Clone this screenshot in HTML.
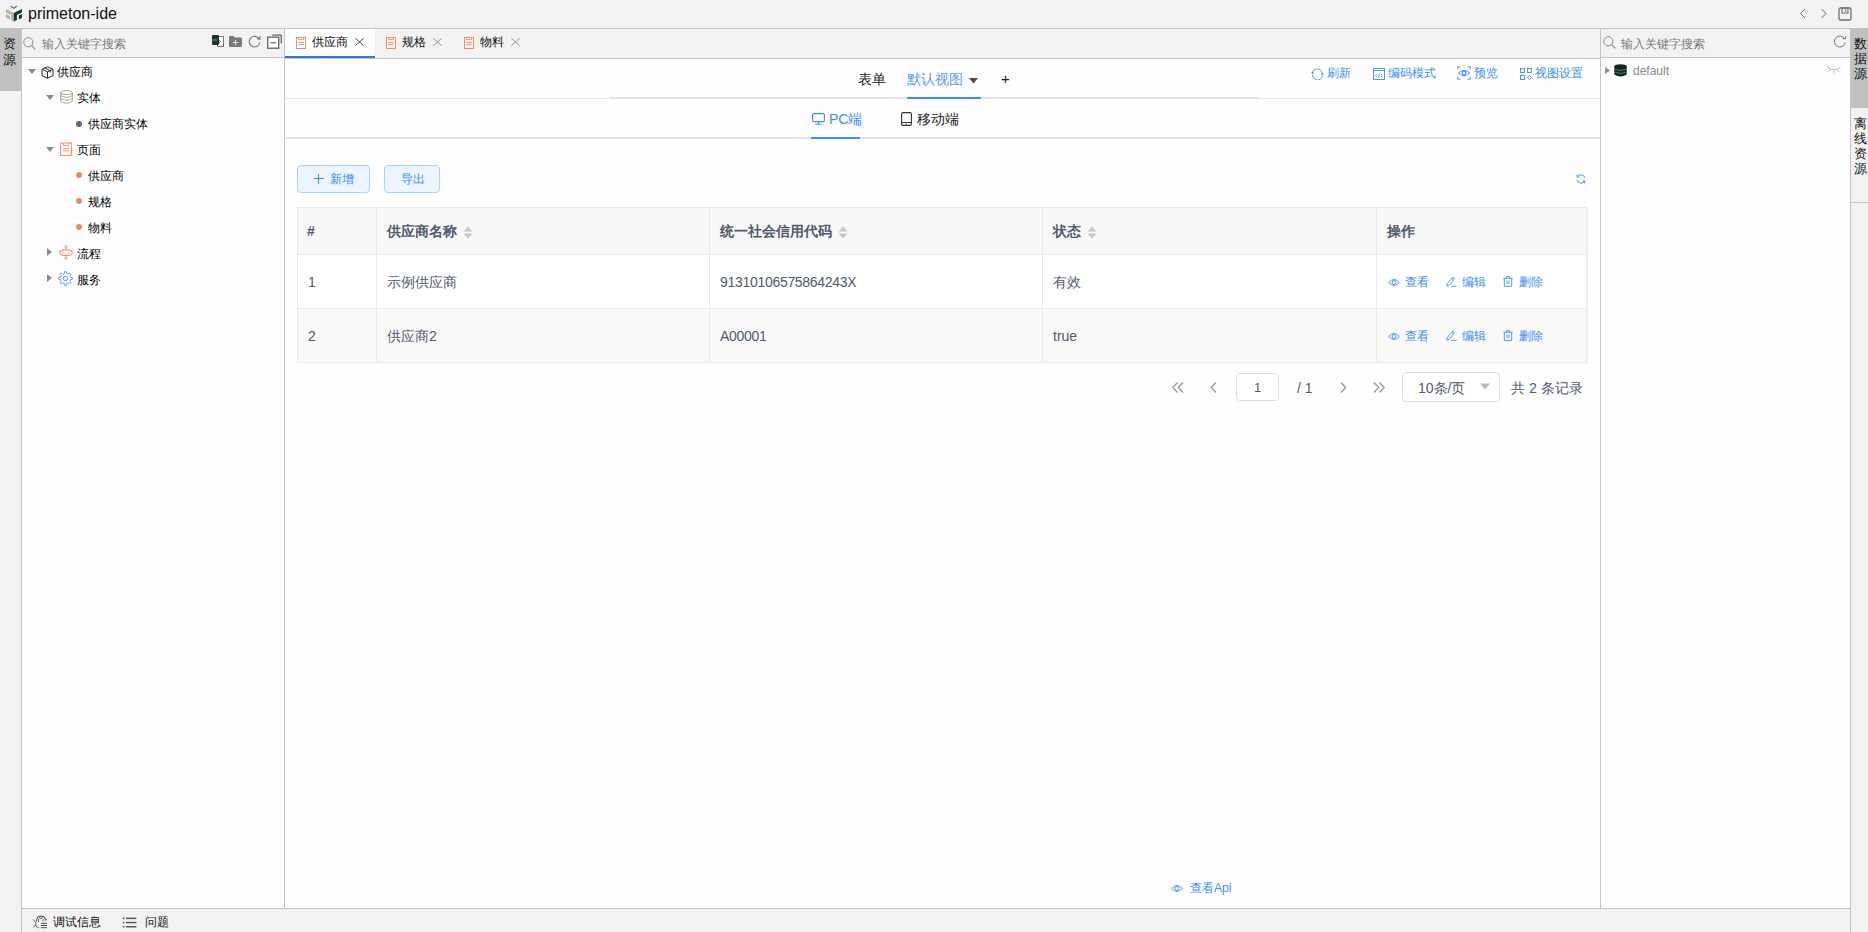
<!DOCTYPE html>
<html><head><meta charset="utf-8">
<style>
*{box-sizing:border-box;margin:0;padding:0}
html,body{width:1868px;height:932px;overflow:hidden;background:#f2f2f2;font-family:"Liberation Sans",sans-serif;color:#1f1f1f}
.abs{position:absolute}
svg{display:block}
#title{left:0;top:0;width:1868px;height:29px;background:#f2f2f2;border-bottom:1px solid #c4c4c4}
#lstrip{left:0;top:29px;width:22px;height:903px;background:#f2f2f2;border-right:1px solid #c4c4c4}
#lpanel{left:22px;top:29px;width:262px;height:879px;background:#fefefe}
#vdiv1{left:284px;top:29px;width:1px;height:879px;background:#c4c4c4}
#center{left:285px;top:29px;width:1315px;height:879px;background:#fefefe}
#vdiv2{left:1600px;top:29px;width:1px;height:879px;background:#c4c4c4}
#rpanel{left:1601px;top:29px;width:249px;height:879px;background:#fefefe}
#rstrip{left:1850px;top:29px;width:18px;height:903px;background:#f2f2f2;border-left:1px solid #c4c4c4}
#bottom{left:22px;top:908px;width:1828px;height:24px;background:#f2f2f2;border-top:1px solid #c4c4c4}
.search{height:29px;background:#f2f2f2;border-bottom:1px solid #c4c4c4}
.ph{color:#7a7a7a;font-size:12px}
.tree{font-size:12px;color:#000}
.blue{color:#3d8ef8}
</style></head><body>
<div id="title" class="abs">
  <svg class="abs" style="left:0;top:0" width="28" height="28" viewBox="0 0 28 28">
    <path d="M10.8 6L13.8 8.2 16.9 6" stroke="#6a6670" stroke-width="1.3" fill="none"/>
    <path d="M6 9L13.8 13V16.5L6 12.4z M11 11.6L13.8 13V21.6L11 20.1z M6 14L10 16V19.6L6 17.7z" fill="#b3b6a3"/>
    <path d="M21.9 9L13.8 13V16.5L21.9 12.4z M16.9 11.5L13.8 13V21.6L16.9 20.1z M21.9 14L18.9 15.5V19.4L21.9 17.9z" fill="#0f3a2b"/>
  </svg>
  <div class="abs" style="left:28px;top:5px;font-size:16px;line-height:18px;color:#111">primeton-ide</div>
  <svg class="abs" style="left:1799px;top:8px" width="8" height="11" viewBox="0 0 8 11"><path d="M6 1L1.5 5.5 6 10" stroke="#666" fill="none"/></svg>
  <svg class="abs" style="left:1820px;top:8px" width="8" height="11" viewBox="0 0 8 11"><path d="M1.5 1L6 5.5 1.5 10" stroke="#666" fill="none"/></svg>
  <svg class="abs" style="left:1838px;top:7px" width="14" height="14" viewBox="0 0 14 14"><rect x="1" y="1" width="12" height="12" rx="1.5" stroke="#6f6f6f" stroke-width="1.3" fill="none"/><rect x="4" y="1" width="6" height="5" stroke="#6f6f6f" stroke-width="1.1" fill="none"/><rect x="7" y="2.5" width="1.2" height="2" fill="#6f6f6f"/></svg>
</div>

<div id="lstrip" class="abs">
  <div class="abs" style="left:0;top:0;width:21px;height:62px;background:#c0c0c0"></div>
  <div class="abs" style="left:3px;top:7px;width:14px;font-size:13px;line-height:16px;color:#111">资<br>源</div>
</div>

<div id="lpanel" class="abs">
  <div class="search abs" style="left:0;top:0;width:262px">
    <svg class="abs" style="left:1px;top:8px" width="13" height="13" viewBox="0 0 13 13"><circle cx="5.3" cy="5.3" r="4.6" stroke="#8a8a8a" stroke-width="1" fill="none"/><path d="M8.6 8.6L12.3 12.3" stroke="#8a8a8a" stroke-width="1.1"/></svg>
    <div class="abs ph" style="left:20px;top:7px;line-height:16px">输入关键字搜索</div>
    <svg class="abs" style="left:190px;top:6px" width="12" height="12" viewBox="0 0 12 12"><rect x="5.5" y="1.5" width="6" height="10" fill="#fff" stroke="#777" stroke-width="1"/><path d="M7 5l2 2M7 8l2-2" stroke="#555" stroke-width="0.8"/><rect x="0" y="0" width="7" height="10" rx="1" fill="#123a2c"/><text x="0.5" y="6" font-size="4" fill="#bbb" font-family="Liberation Sans">on</text></svg>
    <svg class="abs" style="left:207px;top:7px" width="13" height="11" viewBox="0 0 13 11"><path d="M0 1.2Q0 0 1.2 0H4.5L6 1.6H11.8Q13 1.6 13 2.8V9.8Q13 11 11.8 11H1.2Q0 11 0 9.8z" fill="#7a797c"/><path d="M6.5 4v5M4 6.5h5" stroke="#e8e8e8" stroke-width="1"/></svg>
    <svg class="abs" style="left:226px;top:6px" width="13" height="13" viewBox="0 0 13 13"><path d="M11.3 4.2A5.3 5.3 0 1 0 11.8 7.5" stroke="#777" stroke-width="1.1" fill="none"/><path d="M9 3.6L12 4.2 12 1" stroke="#777" stroke-width="1.1" fill="none"/></svg>
    <svg class="abs" style="left:245px;top:5px" width="15" height="15" viewBox="0 0 15 15"><path d="M5 1.2H14.3V9.5" stroke="#6e6e70" stroke-width="1.3" fill="none"/><rect x="0.7" y="3.2" width="11" height="11" stroke="#6e6e70" stroke-width="1.4" fill="#fff"/><path d="M3.5 8.7H9" stroke="#6e6e70" stroke-width="1.3"/></svg>
  </div>
  <div class="tree">
    <svg class="abs" style="left:6px;top:40px" width="8" height="6" viewBox="0 0 8 6"><path d="M0 0h8L4 5z" fill="#8c8c8c"/></svg>
    <svg class="abs" style="left:19px;top:37px" width="13" height="13" viewBox="0 0 13 13"><path d="M6.5 0.8L12 3.3V9.7L6.5 12.2 1 9.7V3.3z" stroke="#1c2b26" stroke-width="1" fill="none"/><path d="M1 3.3L6.5 5.8 12 3.3M6.5 5.8V12.2M3.8 2L9.2 4.6V6.5" stroke="#1c2b26" stroke-width="1" fill="none"/></svg>
    <div class="abs" style="left:35px;top:35px;line-height:16px">供应商</div>

    <svg class="abs" style="left:24px;top:66px" width="8" height="6" viewBox="0 0 8 6"><path d="M0 0h8L4 5z" fill="#8c8c8c"/></svg>
    <svg class="abs" style="left:38px;top:61px" width="13" height="14" viewBox="0 0 13 14"><ellipse cx="6.5" cy="2.6" rx="5.8" ry="2" stroke="#9aa07a" stroke-width="0.9" fill="none"/><path d="M0.7 2.6V11.4Q6.5 15 12.3 11.4V2.6M0.7 5.6Q6.5 9 12.3 5.6M0.7 8.6Q6.5 12 12.3 8.6" stroke="#9aa07a" stroke-width="0.9" fill="none"/></svg>
    <div class="abs" style="left:55px;top:61px;line-height:16px">实体</div>

    <div class="abs" style="left:54px;top:92px;width:6px;height:6px;border-radius:50%;background:#666"></div>
    <div class="abs" style="left:66px;top:87px;line-height:16px">供应商实体</div>

    <svg class="abs" style="left:24px;top:118px" width="8" height="6" viewBox="0 0 8 6"><path d="M0 0h8L4 5z" fill="#8c8c8c"/></svg>
    <svg class="abs" style="left:38px;top:113px" width="12" height="14" viewBox="0 0 12 14"><rect x="0.6" y="1" width="10.8" height="12.4" stroke="#ee8b66" stroke-width="1" fill="none"/><path d="M3.5 1V3.6H8.5V1M3 6.5H9M3 8.8H9" stroke="#ee8b66" stroke-width="0.9" fill="none"/></svg>
    <div class="abs" style="left:55px;top:113px;line-height:16px">页面</div>

    <div class="abs" style="left:54px;top:143px;width:6px;height:6px;border-radius:50%;background:#e88c5e"></div>
    <div class="abs" style="left:66px;top:139px;line-height:16px">供应商</div>
    <div class="abs" style="left:54px;top:169px;width:6px;height:6px;border-radius:50%;background:#e88c5e"></div>
    <div class="abs" style="left:66px;top:165px;line-height:16px">规格</div>
    <div class="abs" style="left:54px;top:195px;width:6px;height:6px;border-radius:50%;background:#e88c5e"></div>
    <div class="abs" style="left:66px;top:191px;line-height:16px">物料</div>

    <svg class="abs" style="left:25px;top:219px" width="6" height="8" viewBox="0 0 6 8"><path d="M0 0v8L5 4z" fill="#8c8c8c"/></svg>
    <svg class="abs" style="left:37px;top:216px" width="14" height="15" viewBox="0 0 14 15"><rect x="0.8" y="5" width="12.4" height="5.4" rx="2.7" stroke="#e8875a" stroke-width="1" fill="none"/><path d="M3.8 6.3V9.1M10.2 6.3V9.1M7 3.2V5M7 10.4V12" stroke="#e8875a" stroke-width="0.8"/><circle cx="7" cy="2" r="1.2" stroke="#e8875a" stroke-width="0.8" fill="none"/><circle cx="7" cy="13.2" r="1.2" stroke="#e8875a" stroke-width="0.8" fill="none"/></svg>
    <div class="abs" style="left:55px;top:217px;line-height:16px">流程</div>

    <svg class="abs" style="left:25px;top:245px" width="6" height="8" viewBox="0 0 6 8"><path d="M0 0v8L5 4z" fill="#8c8c8c"/></svg>
    <svg class="abs" style="left:36px;top:242px" width="15" height="15" viewBox="0 0 15 15"><path d="M12.21 5.55L12.46 6.31L14.34 6.58L14.34 8.42L12.46 8.69L12.21 9.45L11.85 10.16L12.99 11.69L11.69 12.99L10.16 11.85L9.45 12.21L8.69 12.46L8.42 14.34L6.58 14.34L6.31 12.46L5.55 12.21L4.84 11.85L3.31 12.99L2.01 11.69L3.15 10.16L2.79 9.45L2.54 8.69L0.66 8.42L0.66 6.58L2.54 6.31L2.79 5.55L3.15 4.84L2.01 3.31L3.31 2.01L4.84 3.15L5.55 2.79L6.31 2.54L6.58 0.66L8.42 0.66L8.69 2.54L9.45 2.79L10.16 3.15L11.69 2.01L12.99 3.31L11.85 4.84Z" stroke="#4b93f0" stroke-width="0.9" fill="none" stroke-linejoin="round"/><circle cx="7.5" cy="7.5" r="2.2" stroke="#4b93f0" stroke-width="1" fill="none"/></svg>
    <div class="abs" style="left:55px;top:243px;line-height:16px">服务</div>
  </div>
</div>
<div id="vdiv1" class="abs"></div>
<div id="center" class="abs">
  <div class="abs" style="left:0;top:0;width:1315px;height:30px;background:#f2f2f2;border-bottom:1px solid #c4c4c4"></div>
  <div class="abs" style="left:0;top:0;width:90px;height:29px;background:#fff;border-bottom:2px solid #2e78c8"></div>
  <svg class="abs tabic" style="left:11px;top:8px" width="10" height="12" viewBox="0 0 10 12"><rect x="0.5" y="0.5" width="9" height="11" stroke="#ec9070" stroke-width="1" fill="none"/><path d="M2.5 0.5V2.5H7.5V0.5M2.2 5.5H7.8M2.2 7.6H7.8" stroke="#ec9070" stroke-width="0.9" fill="none"/></svg>
  <div class="abs" style="left:27px;top:5px;font-size:12px;line-height:16px;color:#111">供应商</div>
  <svg class="abs" style="left:70px;top:9px" width="9" height="8" viewBox="0 0 9 8"><path d="M0.3 0.3L8.7 7.7M8.7 0.3L0.3 7.7" stroke="#3a3a3a" stroke-width="0.9"/></svg>

  <svg class="abs tabic" style="left:101px;top:8px" width="10" height="12" viewBox="0 0 10 12"><rect x="0.5" y="0.5" width="9" height="11" stroke="#ec9070" stroke-width="1" fill="none"/><path d="M2.5 0.5V2.5H7.5V0.5M2.2 5.5H7.8M2.2 7.6H7.8" stroke="#ec9070" stroke-width="0.9" fill="none"/></svg>
  <div class="abs" style="left:117px;top:5px;font-size:12px;line-height:16px;color:#111">规格</div>
  <svg class="abs" style="left:148px;top:9px" width="9" height="8" viewBox="0 0 9 8"><path d="M0.3 0.3L8.7 7.7M8.7 0.3L0.3 7.7" stroke="#8a8a8a" stroke-width="0.9"/></svg>

  <svg class="abs tabic" style="left:179px;top:8px" width="10" height="12" viewBox="0 0 10 12"><rect x="0.5" y="0.5" width="9" height="11" stroke="#ec9070" stroke-width="1" fill="none"/><path d="M2.5 0.5V2.5H7.5V0.5M2.2 5.5H7.8M2.2 7.6H7.8" stroke="#ec9070" stroke-width="0.9" fill="none"/></svg>
  <div class="abs" style="left:195px;top:5px;font-size:12px;line-height:16px;color:#111">物料</div>
  <svg class="abs" style="left:226px;top:9px" width="9" height="8" viewBox="0 0 9 8"><path d="M0.3 0.3L8.7 7.7M8.7 0.3L0.3 7.7" stroke="#8a8a8a" stroke-width="0.9"/></svg>

  <!-- header nav -->
  <div class="abs" style="left:0;top:69px;width:1315px;height:1px;background:#f0e4e4"></div>
  <div class="abs" style="left:325px;top:68px;width:649px;height:2px;background:#dfe3ea"></div>
  <div class="abs" style="left:0;top:108px;width:1315px;height:2px;background:#e1e4ea"></div>
  <div class="abs" style="left:573px;top:40px;font-size:14px;line-height:20px;color:#222">表单</div>
  <div class="abs" style="left:622px;top:40px;font-size:14px;line-height:20px;color:#5c9cf2">默认视图</div>
  <svg class="abs" style="left:684px;top:49px" width="9" height="6" viewBox="0 0 9 6"><path d="M0 0h9L4.5 5.5z" fill="#4a4a4a"/></svg>
  <div class="abs" style="left:622px;top:68px;width:74px;height:2px;background:#3d8ef8"></div>
  <div class="abs" style="left:716px;top:40px;font-size:15px;line-height:20px;color:#222">+</div>

  <svg class="abs" style="left:527px;top:84px" width="13" height="12" viewBox="0 0 13 12"><rect x="0.6" y="0.6" width="11.8" height="8" rx="1.2" stroke="#3d8ef8" stroke-width="1.1" fill="none"/><path d="M6.5 8.6V11M3.5 11.3H9.5" stroke="#3d8ef8" stroke-width="1.1"/></svg>
  <div class="abs" style="left:544px;top:80px;font-size:14px;line-height:20px;color:#3d8ef8">PC端</div>
  <div class="abs" style="left:526px;top:108px;width:49px;height:2px;background:#3d8ef8"></div>
  <svg class="abs" style="left:616px;top:83px" width="11" height="14" viewBox="0 0 11 14"><rect x="0.6" y="0.6" width="9.8" height="12.8" rx="1.3" stroke="#333" stroke-width="1.1" fill="none"/><path d="M0.6 10.5H10.4" stroke="#333" stroke-width="1"/><circle cx="5.5" cy="12" r="0.6" fill="#333"/></svg>
  <div class="abs" style="left:632px;top:80px;font-size:14px;line-height:20px;color:#222">移动端</div>

  <!-- right tools -->
  <svg class="abs" style="left:1026px;top:39px" width="13" height="12" viewBox="0 0 13 12"><path d="M1.6 4.6A4.9 4.9 0 0 1 11.2 5.2M11.4 7.4A4.9 4.9 0 0 1 1.6 6.8" stroke="#3d8ef8" stroke-width="0.9" fill="none"/><path d="M0 4.2L3.2 4.2 1.6 6.2z M9.8 6.8L13 6.8 11.4 4.8z" fill="#3d8ef8"/></svg>
  <div class="abs blue" style="left:1042px;top:36px;font-size:12px;line-height:16px">刷新</div>
  <svg class="abs" style="left:1088px;top:39px" width="12" height="12" viewBox="0 0 12 12"><rect x="0.5" y="0.5" width="11" height="11" stroke="#3d8ef8" stroke-width="0.9" fill="none"/><path d="M0.5 2.5H11.5" stroke="#3d8ef8" stroke-width="0.9"/><path d="M4.2 6L2.6 7.6 4.2 9.2M7.8 6L9.4 7.6 7.8 9.2M6.6 5.6L5.4 9.6" stroke="#3d8ef8" stroke-width="0.8" fill="none"/></svg>
  <div class="abs blue" style="left:1103px;top:36px;font-size:12px;line-height:16px">编码模式</div>
  <svg class="abs" style="left:1172px;top:37px" width="14" height="14" viewBox="0 0 14 14"><path d="M0.8 3.5V0.8H3.5M10.5 0.8H13.2V3.5M13.2 10.5V13.2H10.5M3.5 13.2H0.8V10.5" stroke="#3d8ef8" stroke-width="0.9" fill="none"/><path d="M1.2 7Q7 1.6 12.8 7Q7 12.4 1.2 7z" stroke="#3d8ef8" stroke-width="0.9" fill="none"/><circle cx="7" cy="7" r="1.9" stroke="#3d8ef8" stroke-width="1.1" fill="none"/></svg>
  <div class="abs blue" style="left:1189px;top:36px;font-size:12px;line-height:16px">预览</div>
  <svg class="abs" style="left:1235px;top:39px" width="12" height="12" viewBox="0 0 12 12"><rect x="0.5" y="0.5" width="4" height="4" stroke="#3d8ef8" stroke-width="0.9" fill="none"/><rect x="7.5" y="0.5" width="4" height="4" stroke="#3d8ef8" stroke-width="0.9" fill="none"/><rect x="0.5" y="7.5" width="4" height="4" stroke="#3d8ef8" stroke-width="0.9" fill="none"/><path d="M9.5 7.3L11.6 9.4 9.5 11.5 7.4 9.4z" stroke="#3d8ef8" stroke-width="0.9" fill="none" stroke-linejoin="round"/></svg>
  <div class="abs blue" style="left:1250px;top:36px;font-size:12px;line-height:16px">视图设置</div>

  <div class="abs" style="left:12px;top:136px;width:73px;height:28px;background:#ecf5ff;border:1px solid #a9d3fb;border-radius:4px"></div>
  <svg class="abs" style="left:29px;top:145px" width="10" height="10" viewBox="0 0 10 10"><path d="M4.5 0V10M0 4.5H10" stroke="#3d8ef8" stroke-width="1"/></svg>
  <div class="abs blue" style="left:45px;top:142px;font-size:12px;line-height:16px">新增</div>
  <div class="abs" style="left:99px;top:136px;width:56px;height:28px;background:#ecf5ff;border:1px solid #a9d3fb;border-radius:4px"></div>
  <div class="abs blue" style="left:116px;top:142px;font-size:12px;line-height:16px">导出</div>
  <svg class="abs" style="left:1291px;top:145px" width="10" height="10" viewBox="0 0 10 10"><path d="M8.8 3.8A4 4 0 0 0 1.6 2.6M1.2 6.2A4 4 0 0 0 8.4 7.4" stroke="#3d8ef8" stroke-width="1" fill="none"/><path d="M1.2 0.6V3H3.6M8.8 9.4V7H6.4" stroke="#3d8ef8" stroke-width="1" fill="none"/></svg>
<div class="abs" style="left:12px;top:178px;width:1290px;height:156px;background:#fff;border:1px solid #e8eaec"></div>
<div class="abs" style="left:13px;top:179px;width:1288px;height:46px;background:#f8f8f9"></div>
<div class="abs" style="left:13px;top:280px;width:1288px;height:53px;background:#f9f9fa"></div>
<div class="abs" style="left:13px;top:225px;width:1288px;height:1px;background:#e8eaec"></div>
<div class="abs" style="left:13px;top:279px;width:1288px;height:1px;background:#e8eaec"></div>
<div class="abs" style="left:91px;top:179px;width:1px;height:154px;background:#e8eaec"></div>
<div class="abs" style="left:424px;top:179px;width:1px;height:154px;background:#e8eaec"></div>
<div class="abs" style="left:757px;top:179px;width:1px;height:154px;background:#e8eaec"></div>
<div class="abs" style="left:1091px;top:179px;width:1px;height:154px;background:#e8eaec"></div>
<div class="abs" style="left:1302px;top:178px;width:1px;height:156px;background:#eef0f2"></div>
<div class="abs" style="left:22px;top:192px;font-size:14px;line-height:20px;font-weight:bold;color:#515a6e">#</div>
<div class="abs" style="left:102px;top:192px;font-size:14px;line-height:20px;font-weight:bold;color:#515a6e">供应商名称</div>
<svg class="abs" style="left:178px;top:197px" width="10" height="13" viewBox="0 0 10 13"><path d="M5 0.5L9.5 5.5H0.5z M0.5 7.5H9.5L5 12.5z" fill="#c5c8ce"/></svg>
<div class="abs" style="left:435px;top:192px;font-size:14px;line-height:20px;font-weight:bold;color:#515a6e">统一社会信用代码</div>
<svg class="abs" style="left:553px;top:197px" width="10" height="13" viewBox="0 0 10 13"><path d="M5 0.5L9.5 5.5H0.5z M0.5 7.5H9.5L5 12.5z" fill="#c5c8ce"/></svg>
<div class="abs" style="left:768px;top:192px;font-size:14px;line-height:20px;font-weight:bold;color:#515a6e">状态</div>
<svg class="abs" style="left:802px;top:197px" width="10" height="13" viewBox="0 0 10 13"><path d="M5 0.5L9.5 5.5H0.5z M0.5 7.5H9.5L5 12.5z" fill="#c5c8ce"/></svg>
<div class="abs" style="left:1102px;top:192px;font-size:14px;line-height:20px;font-weight:bold;color:#515a6e">操作</div>
<div class="abs" style="left:23px;top:243px;font-size:14px;line-height:20px;color:#515a6e;letter-spacing:-0.3px;">1</div>
<div class="abs" style="left:102px;top:243px;font-size:14px;line-height:20px;color:#515a6e;">示例供应商</div>
<div class="abs" style="left:435px;top:243px;font-size:14px;line-height:20px;color:#515a6e;letter-spacing:-0.3px;">91310106575864243X</div>
<div class="abs" style="left:768px;top:243px;font-size:14px;line-height:20px;color:#515a6e;">有效</div>
<svg class="abs" style="left:1103px;top:249px" width="12" height="9" viewBox="0 0 12 9"><path d="M0.6 4.5Q6 -1.5 11.4 4.5Q6 10.5 0.6 4.5z" stroke="#3d8ef8" stroke-width="0.9" fill="none"/><circle cx="6" cy="4.5" r="2" stroke="#3d8ef8" stroke-width="0.9" fill="none"/></svg>
<div class="abs blue" style="left:1120px;top:245px;font-size:12px;line-height:16px">查看</div>
<svg class="abs" style="left:1161px;top:247px" width="11" height="11" viewBox="0 0 11 11"><path d="M0.8 10.2L1.2 7.6 6.8 1.2 8.6 2.6 3.2 9.2z M5.8 2.4L7.6 3.8" stroke="#3d8ef8" stroke-width="0.9" fill="none" stroke-linejoin="round"/><path d="M5 10.3H10.5" stroke="#3d8ef8" stroke-width="0.9"/></svg>
<div class="abs blue" style="left:1177px;top:245px;font-size:12px;line-height:16px">编辑</div>
<svg class="abs" style="left:1218px;top:247px" width="10" height="11" viewBox="0 0 10 11"><path d="M0.3 2.3H9.7M3.3 2.3V0.6H6.7V2.3M1.3 2.3V10.4H8.7V2.3M4 4.5V8M6 4.5V8" stroke="#3d8ef8" stroke-width="0.9" fill="none"/></svg>
<div class="abs blue" style="left:1234px;top:245px;font-size:12px;line-height:16px">删除</div>
<div class="abs" style="left:23px;top:297px;font-size:14px;line-height:20px;color:#515a6e;letter-spacing:-0.3px;">2</div>
<div class="abs" style="left:102px;top:297px;font-size:14px;line-height:20px;color:#515a6e;">供应商2</div>
<div class="abs" style="left:435px;top:297px;font-size:14px;line-height:20px;color:#515a6e;letter-spacing:-0.3px;">A00001</div>
<div class="abs" style="left:768px;top:297px;font-size:14px;line-height:20px;color:#515a6e;">true</div>
<svg class="abs" style="left:1103px;top:303px" width="12" height="9" viewBox="0 0 12 9"><path d="M0.6 4.5Q6 -1.5 11.4 4.5Q6 10.5 0.6 4.5z" stroke="#3d8ef8" stroke-width="0.9" fill="none"/><circle cx="6" cy="4.5" r="2" stroke="#3d8ef8" stroke-width="0.9" fill="none"/></svg>
<div class="abs blue" style="left:1120px;top:299px;font-size:12px;line-height:16px">查看</div>
<svg class="abs" style="left:1161px;top:301px" width="11" height="11" viewBox="0 0 11 11"><path d="M0.8 10.2L1.2 7.6 6.8 1.2 8.6 2.6 3.2 9.2z M5.8 2.4L7.6 3.8" stroke="#3d8ef8" stroke-width="0.9" fill="none" stroke-linejoin="round"/><path d="M5 10.3H10.5" stroke="#3d8ef8" stroke-width="0.9"/></svg>
<div class="abs blue" style="left:1177px;top:299px;font-size:12px;line-height:16px">编辑</div>
<svg class="abs" style="left:1218px;top:301px" width="10" height="11" viewBox="0 0 10 11"><path d="M0.3 2.3H9.7M3.3 2.3V0.6H6.7V2.3M1.3 2.3V10.4H8.7V2.3M4 4.5V8M6 4.5V8" stroke="#3d8ef8" stroke-width="0.9" fill="none"/></svg>
<div class="abs blue" style="left:1234px;top:299px;font-size:12px;line-height:16px">删除</div>

  <svg class="abs" style="left:887px;top:353px" width="12" height="11" viewBox="0 0 12 11"><path d="M5.5 0.5L0.8 5.5 5.5 10.5M11 0.5L6.3 5.5 11 10.5" stroke="#8d94a0" stroke-width="1.2" fill="none"/></svg>
  <svg class="abs" style="left:925px;top:353px" width="7" height="11" viewBox="0 0 7 11"><path d="M6 0.5L1.3 5.5 6 10.5" stroke="#8d94a0" stroke-width="1.2" fill="none"/></svg>
  <div class="abs" style="left:951px;top:344px;width:43px;height:28px;background:#fff;border:1px solid #dcdee2;border-radius:4px"></div>
  <div class="abs" style="left:951px;top:349px;width:43px;text-align:center;font-size:13px;line-height:20px;color:#515a6e">1</div>
  <div class="abs" style="left:1012px;top:349px;font-size:14px;line-height:20px;color:#515a6e">/ 1</div>
  <svg class="abs" style="left:1055px;top:353px" width="7" height="11" viewBox="0 0 7 11"><path d="M1 0.5L5.7 5.5 1 10.5" stroke="#8d94a0" stroke-width="1.2" fill="none"/></svg>
  <svg class="abs" style="left:1088px;top:353px" width="12" height="11" viewBox="0 0 12 11"><path d="M1 0.5L5.7 5.5 1 10.5M6.5 0.5L11.2 5.5 6.5 10.5" stroke="#8d94a0" stroke-width="1.2" fill="none"/></svg>
  <div class="abs" style="left:1117px;top:343px;width:98px;height:30px;background:#fff;border:1px solid #dcdee2;border-radius:4px"></div>
  <div class="abs" style="left:1133px;top:349px;font-size:14px;line-height:20px;color:#515a6e">10条/页</div>
  <svg class="abs" style="left:1195px;top:354px" width="10" height="7" viewBox="0 0 10 7"><path d="M0 0.5H10L5 6.5z" fill="#b5b9c0"/></svg>
  <div class="abs" style="left:1226px;top:349px;font-size:14px;line-height:20px;color:#515a6e">共 2 条记录</div>
  <svg class="abs" style="left:886px;top:855px" width="12" height="9" viewBox="0 0 12 9"><path d="M0.6 4.5Q6 -1.5 11.4 4.5Q6 10.5 0.6 4.5z" stroke="#3d8ef8" stroke-width="0.9" fill="none"/><circle cx="6" cy="4.5" r="2" stroke="#3d8ef8" stroke-width="0.9" fill="none"/></svg>
  <div class="abs blue" style="left:905px;top:851px;font-size:12px;line-height:16px">查看Api</div>
</div>
<div id="vdiv2" class="abs"></div>
<div id="rpanel" class="abs">
  <div class="search abs" style="left:0;top:0;width:249px">
    <svg class="abs" style="left:2px;top:7px" width="13" height="13" viewBox="0 0 13 13"><circle cx="5.3" cy="5.3" r="4.6" stroke="#8a8a8a" stroke-width="1" fill="none"/><path d="M8.6 8.6L12.3 12.3" stroke="#8a8a8a" stroke-width="1.1"/></svg>
    <div class="abs ph" style="left:20px;top:7px;line-height:16px">输入关键字搜索</div>
    <svg class="abs" style="left:232px;top:6px" width="14" height="13" viewBox="0 0 14 13"><path d="M11.8 4A5.5 5.5 0 1 0 12.3 7.5" stroke="#7a7a7a" stroke-width="1" fill="none"/><path d="M9.5 3.5L12.5 4 12.8 0.8" stroke="#7a7a7a" stroke-width="1" fill="none"/></svg>
  </div>
  <svg class="abs" style="left:4px;top:38px" width="5" height="7" viewBox="0 0 5 7"><path d="M0 0v7L5 3.5z" fill="#8c8c8c"/></svg>
  <svg class="abs" style="left:13px;top:35px" width="13" height="13" viewBox="0 0 13 13"><ellipse cx="6.5" cy="2.5" rx="6.2" ry="2.3" fill="#0e2a1e"/><path d="M0.3 2.5V10.5Q6.5 14.5 12.7 10.5V2.5z" fill="#0e2a1e"/><path d="M1 5.2Q6.5 7.8 12 5.2M1 8.2Q6.5 10.8 12 8.2" stroke="#7d8a84" stroke-width="0.7" fill="none"/></svg>
  <div class="abs" style="left:32px;top:34px;font-size:12px;line-height:16px;color:#8a8a8a">default</div>
  <svg class="abs" style="left:226px;top:37px" width="14" height="8" viewBox="0 0 14 8"><path d="M0.5 1Q7 7 13.5 1M3 3.8L2 5.5M7 5V7M11 3.8L12 5.5M0.8 1L0 0" stroke="#9a9a9a" stroke-width="0.8" fill="none"/></svg>
</div>
<div id="rstrip" class="abs">
  <div class="abs" style="left:0;top:0;width:17px;height:79px;background:#c0c0c0"></div>
  <div class="abs" style="left:3px;top:7px;width:16px;font-size:13px;line-height:15px;color:#111">数<br>据<br>源</div>
  <div class="abs" style="left:3px;top:87px;width:16px;font-size:13px;line-height:15px;color:#111">离<br>线<br>资<br>源</div>
  <div class="abs" style="left:0;top:173px;width:17px;height:1px;background:#c4c4c4"></div>
</div>
<div id="bottom" class="abs">
  <svg class="abs" style="left:10px;top:6px" width="16" height="14" viewBox="0 0 16 14"><path d="M4.5 6.5Q4.5 1 9 1Q13.2 1 13.6 5.5" stroke="#5a5560" stroke-width="1.1" fill="none"/><ellipse cx="8.8" cy="2.6" rx="1.6" ry="1" stroke="#5a5560" stroke-width="0.9" fill="none"/><path d="M6.5 4V7M11 4V6.5M13.6 5.5L14.6 4.2" stroke="#5a5560" stroke-width="0.9" fill="none"/><path d="M1.2 4.5L3.8 7.8Q3.2 11.5 6.8 13M1.2 12.5L3.6 10" stroke="#5a5560" stroke-width="1" fill="none"/><path d="M8.8 8.3H15M8.8 10.5H15M8.8 12.7H15" stroke="#5a5560" stroke-width="1"/></svg>
  <div class="abs" style="left:31px;top:5px;font-size:12px;line-height:16px;color:#111">调试信息</div>
  <svg class="abs" style="left:100px;top:8px" width="15" height="11" viewBox="0 0 15 11"><rect x="0.8" y="0.6" width="1.7" height="1.5" fill="#5f5558"/><rect x="0.8" y="4.8" width="1.7" height="1.5" fill="#5f5558"/><rect x="0.8" y="9" width="1.7" height="1.5" fill="#5f5558"/><rect x="4" y="0.6" width="10.4" height="1.5" fill="#5f5558"/><rect x="4" y="4.8" width="10.4" height="1.5" fill="#5f5558"/><rect x="4" y="9" width="10.4" height="1.5" fill="#5f5558"/></svg>
  <div class="abs" style="left:123px;top:5px;font-size:12px;line-height:16px;color:#111">问题</div>
</div>
</body></html>
